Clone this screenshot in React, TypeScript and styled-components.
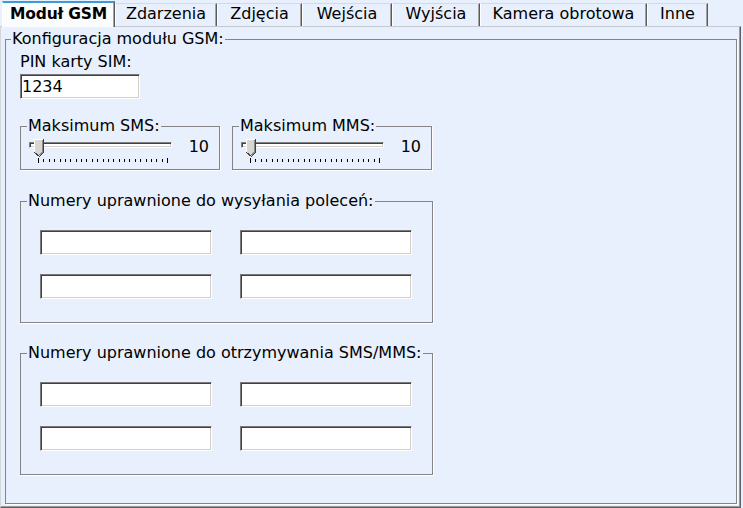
import React from 'react';
import styled, { createGlobalStyle, css } from 'styled-components';

const GlobalStyle = createGlobalStyle`
  html, body {
    margin: 0;
    padding: 0;
    background: #e8f0fd;
  }
  body {
    font-family: "DejaVu Sans", Verdana, sans-serif;
    font-size: 16px;
    color: #000;
    overflow: hidden;
  }
`;

const Window = styled.div`
  width: 743px;
  height: 508px;
  display: flex;
  flex-direction: column;
  background: #e8f0fd;
`;

const TabStrip = styled.div`
  display: flex;
  align-items: flex-end;
  flex-shrink: 0;
  height: 26px;
  padding-left: 2px;
`;

const Tab = styled.div<{ $active?: boolean; $width: number }>`
  box-sizing: border-box;
  width: ${(p) => p.$width}px;
  text-align: center;
  line-height: 18px;
  white-space: nowrap;
  border-left: 1px solid #fff;
  border-right: 1px solid #5a5a5a;
  box-shadow: inset -1px 0 0 #a4a4a4;
  ${(p) =>
    p.$active
      ? css`
          position: relative;
          z-index: 1;
          height: 26px;
          margin-bottom: -1px;
          padding-top: 2px;
          background: #fbfcfe;
          border-top: 2px solid #3d9bd4;
          font-weight: bold;
          font-size: 15.5px;
          letter-spacing: -0.2px;
        `
      : css`
          height: 23px;
          padding-top: 1px;
          background: #e8f0fd;
          border-top: 1px solid #d6dadf;
        `}
`;

const Panel = styled.div`
  flex: 1;
  box-sizing: border-box;
  width: 741px;
  display: flex;
  flex-direction: column;
  padding: 3px 3px 3px 4px;
  border-top: 1px solid #c4c9cf;
  border-left: 1px solid #d2d6db;
  border-right: 1px solid #5f5f5f;
  border-bottom: 1px solid #5f5f5f;
  box-shadow: inset -1px -1px 0 #9a9a9a;
`;

const Group = styled.fieldset<{ $width?: number }>`
  box-sizing: border-box;
  margin: 0;
  padding: 0;
  min-width: 0;
  border: 1px solid #848484;
  box-shadow: 1px 1px 0 #fff;
  ${(p) => p.$width && css`width: ${p.$width}px;`}
`;

const MainGroup = styled(Group)`
  flex: 1;
`;

const Legend = styled.legend<{ $indent: number }>`
  margin-left: ${(p) => p.$indent}px;
  padding: 0 1px;
  line-height: 18px;
  white-space: nowrap;
`;

const MainBody = styled.div`
  display: flex;
  flex-direction: column;
  align-items: flex-start;
  padding: 5px 0 0 14px;
`;

const Label = styled.div`
  line-height: 18px;
`;

const TextBox = styled.input<{ $width: number }>`
  box-sizing: border-box;
  width: ${(p) => p.$width}px;
  height: 25px;
  margin: 0;
  padding: 0 1px;
  font-family: inherit;
  font-size: 16px;
  line-height: 21px;
  color: #000;
  background: #fff;
  border: 1px solid;
  border-color: #7a7a7a #fff #fff #7a7a7a;
  box-shadow: inset 1px 1px 0 #404040, inset -1px -1px 0 #d4d0c8;
  outline: none;
`;

const PinBox = styled(TextBox)`
  margin-top: 3px;
`;

const SliderRow = styled.div`
  display: flex;
  gap: 12px;
  margin-top: 18px;
`;

const SliderBody = styled.div`
  display: flex;
  align-items: flex-start;
  padding: 0 0 6px 8px;
`;

const SliderBox = styled.div`
  position: relative;
  flex-shrink: 0;
  width: 143px;
  height: 24px;
  margin-top: 4px;
`;

const Track = styled.div`
  box-sizing: border-box;
  width: 143px;
  height: 6px;
  margin-top: 3px;
  background: #fff;
  border: 1px solid;
  border-color: #808080 #fff #fff #808080;
  box-shadow: inset 1px 1px 0 #404040, inset -1px -1px 0 #d4d0c8;
`;

const Thumb = styled.svg`
  position: absolute;
  left: 5px;
  top: 0;
`;

const Ticks = styled.svg`
  display: block;
  margin-top: 10px;
`;

const Value = styled.div`
  flex: 1;
  padding: 3px 10px 0 0;
  text-align: right;
  line-height: 18px;
`;

const NumbersGroup = styled(Group)`
  margin-top: 22px;
  & + & {
    margin-top: 21px;
  }
`;

const NumbersGrid = styled.div`
  display: grid;
  grid-template-columns: 172px 172px;
  column-gap: 28px;
  row-gap: 19px;
  padding: 20px 0 23px 19px;
`;

const tabs = [
  { label: 'Moduł GSM', width: 113 },
  { label: 'Zdarzenia', width: 102 },
  { label: 'Zdjęcia', width: 85 },
  { label: 'Wejścia', width: 90 },
  { label: 'Wyjścia', width: 88 },
  { label: 'Kamera obrotowa', width: 167 },
  { label: 'Inne', width: 61 },
];

const TICKS = 25;

const Slider: React.FC<{ label: string; value: number; width: number }> = ({ label, value, width }) => (
  <Group $width={width}>
    <Legend $indent={6}>{label}</Legend>
    <SliderBody>
      <SliderBox>
        <Track />
        <Thumb width="10" height="18" viewBox="0 0 10 18" shapeRendering="crispEdges">
          <polygon points="0.5,0.5 9.5,0.5 9.5,13.5 5,17.5 0.5,13.5" fill="#d8d6d0" />
          <polyline points="0.5,14 0.5,0.5 9,0.5" fill="none" stroke="#fff" />
          <polyline points="9.5,0 9.5,13.5 5.5,17.5 0.5,13.5" fill="none" stroke="#404040" />
          <polyline points="8.5,1 8.5,13 5.5,16" fill="none" stroke="#8a8a8a" />
        </Thumb>
        <Ticks width="143" height="5" shapeRendering="crispEdges">
          {Array.from({ length: TICKS }, (_, i) => {
            const x = Math.round(9 + (i * 129) / (TICKS - 1)) + 0.5;
            const end = i === 0 || i === TICKS - 1;
            return <line key={i} x1={x} x2={x} y1={end ? 0 : 1} y2={end ? 5 : 4} stroke="#000" />;
          })}
        </Ticks>
      </SliderBox>
      <Value>{value}</Value>
    </SliderBody>
  </Group>
);

const Numbers: React.FC<{ label: string }> = ({ label }) => (
  <NumbersGroup $width={413}>
    <Legend $indent={6}>{label}</Legend>
    <NumbersGrid>
      {[0, 1, 2, 3].map((i) => (
        <TextBox key={i} $width={172} defaultValue="" />
      ))}
    </NumbersGrid>
  </NumbersGroup>
);

const App: React.FC = () => {
  return (
    <>
      <GlobalStyle />
      <Window>
        <TabStrip>
          {tabs.map((t, i) => (
            <Tab key={t.label} $active={i === 0} $width={t.width}>
              {t.label}
            </Tab>
          ))}
        </TabStrip>
        <Panel>
          <MainGroup>
            <Legend $indent={5}>Konfiguracja modułu GSM:</Legend>
            <MainBody>
              <Label>PIN karty SIM:</Label>
              <PinBox $width={120} defaultValue="1234" />
              <SliderRow>
                <Slider label="Maksimum SMS:" value={10} width={200} />
                <Slider label="Maksimum MMS:" value={10} width={200} />
              </SliderRow>
              <Numbers label="Numery uprawnione do wysyłania poleceń:" />
              <Numbers label="Numery uprawnione do otrzymywania SMS/MMS:" />
            </MainBody>
          </MainGroup>
        </Panel>
      </Window>
    </>
  );
};

export default App;
